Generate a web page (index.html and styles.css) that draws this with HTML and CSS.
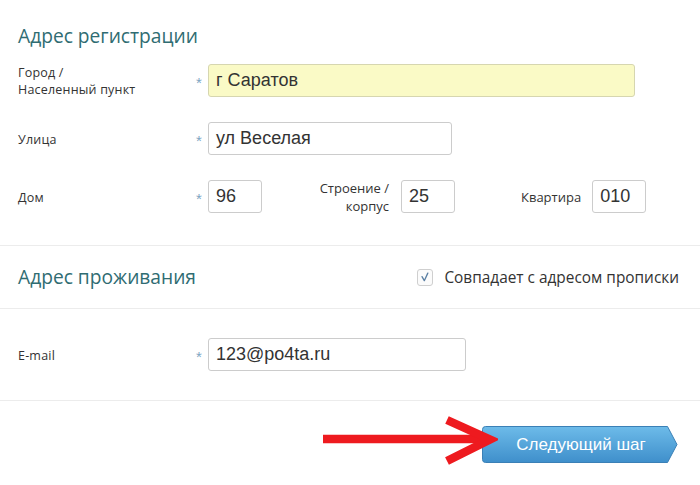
FILE: index.html
```html
<!DOCTYPE html>
<html lang="ru">
<head>
<meta charset="utf-8">
<title>Адрес</title>
<link rel="stylesheet" href="styles.css">
</head>
<body>
<div class="page">
  <section class="block block-reg">
    <h2 class="title">Адрес регистрации</h2>
    <div class="row">
      <div class="label">Город /<br>Населенный пункт</div>
      <span class="req">*</span>
      <div class="input input-city filled">г Саратов</div>
    </div>
    <div class="row">
      <div class="label">Улица</div>
      <span class="req">*</span>
      <div class="input input-street">ул Веселая</div>
    </div>
    <div class="row">
      <div class="label">Дом</div>
      <span class="req">*</span>
      <div class="input input-small">96</div>
      <div class="sublabel sublabel-build">Строение /<br>корпус</div>
      <div class="input input-small">25</div>
      <div class="sublabel sublabel-flat">Квартира</div>
      <div class="input input-small">010</div>
    </div>
  </section>

  <section class="block block-live">
    <h2 class="title">Адрес проживания</h2>
    <label class="check">
      <span class="box">
        <svg viewBox="0 0 16 16" width="16" height="16"><path d="M4.6 7.6 L7.2 12.2 L11.2 3.6" fill="none" stroke="#5a7fa3" stroke-width="1.5" stroke-linecap="round" stroke-linejoin="round"/></svg>
      </span>
      <span class="check-text">Совпадает с адресом прописки</span>
    </label>
  </section>

  <section class="block block-mail">
    <div class="row">
      <div class="label">E-mail</div>
      <span class="req">*</span>
      <div class="input input-mail">123@po4ta.ru</div>
    </div>
  </section>

  <section class="actions">
    <div class="next">
      <svg class="next-bg" viewBox="0 0 196 37" width="196" height="37" preserveAspectRatio="none">
        <defs>
          <linearGradient id="g" x1="0" y1="0" x2="0" y2="1">
            <stop offset="0" stop-color="#6dbbe9"/>
            <stop offset="1" stop-color="#3f8fcb"/>
          </linearGradient>
        </defs>
        <path d="M3.5 0.5 H185.5 L195 18.5 L185.5 36.5 H3.5 Q0.5 36.5 0.5 33.5 V3.5 Q0.5 0.5 3.5 0.5 Z" fill="url(#g)" stroke="#3b80b6" stroke-width="1"/>
      </svg>
      <span class="next-text">Следующий шаг</span>
    </div>
    <svg class="pointer" viewBox="0 0 180 56" width="180" height="56">
      <path d="M5 26 H170" stroke="#ee1a1f" stroke-width="8.5" fill="none"/>
      <path d="M129 7 L172 26.5 L129 48" stroke="#ee1a1f" stroke-width="8.5" fill="none" stroke-linejoin="miter"/>
    </svg>
  </section>
</div>
</body>
</html>
```

FILE: styles.css
```css
html, body {
  margin: 0;
  padding: 0;
  background: #ffffff;
}

.page {
  width: 700px;
  height: 485px;
  overflow: hidden;
  font-family: "Open Sans", "DejaVu Sans", sans-serif;
  color: #333;
}

.block {
  border-bottom: 1px solid #ececec;
  padding-left: 18px;
}

.block-reg {
  padding-top: 24px;
  padding-bottom: 32px;
}

.title {
  margin: 0;
  font-family: "Open Sans", sans-serif;
  font-weight: 400;
  font-size: 19.2px;
  line-height: 24px;
  color: #2f6c72;
}

.block-reg .title {
  margin-bottom: 16px;
}

.row {
  display: flex;
  align-items: center;
  height: 33px;
}

.row + .row {
  margin-top: 25px;
}

.label {
  width: 176px;
  font-size: 12.5px;
  line-height: 17px;
  letter-spacing: 0.2px;
  padding-top: 1px;
  color: #333;
}

.req {
  width: 10px;
  margin-right: 4px;
  text-align: center;
  color: #7ea5c3;
  font-size: 15px;
  line-height: 15px;
  padding-top: 4px;
  font-family: "Liberation Sans", sans-serif;
}

.input {
  box-sizing: border-box;
  height: 33px;
  border: 1px solid #cccccc;
  border-radius: 3px;
  background: #fff;
  padding-left: 7px;
  font-family: "Liberation Sans", Arial, sans-serif;
  font-size: 18px;
  line-height: 31px;
  color: #333;
  white-space: nowrap;
}

.input.filled {
  background: #fafac6;
  border-color: #d6d6b0;
}

.input-city { width: 427px; }
.input-street { width: 244px; }
.input-mail { width: 258px; }
.input-small { width: 54px; }

.sublabel {
  font-size: 13px;
  line-height: 18px;
  color: #333;
}

.sublabel-build {
  width: 127px;
  text-align: right;
  margin-right: 12px;
}

.sublabel-flat {
  margin-left: 66px;
  margin-right: 11px;
}

.block-live {
  height: 62px;
  display: flex;
  align-items: center;
  justify-content: space-between;
  padding-right: 21px;
}

.check {
  display: flex;
  align-items: center;
  gap: 11px;
}

.box {
  box-sizing: border-box;
  width: 16px;
  height: 17px;
  border: 1px solid #cfcfcf;
  border-radius: 3px;
  background: #fbfbfb;
  display: flex;
  align-items: center;
  justify-content: center;
}

.box svg {
  display: block;
}

.check-text {
  font-size: 15.4px;
  color: #333;
}

.block-mail {
  padding-top: 29px;
  padding-bottom: 29px;
}

.actions {
  position: relative;
  display: flex;
  justify-content: flex-end;
  padding-top: 25px;
  padding-right: 22px;
}

.next {
  position: relative;
  width: 196px;
  height: 37px;
  display: flex;
  align-items: center;
  justify-content: center;
}

.next-bg {
  position: absolute;
  left: 0;
  top: 0;
}

.next-text {
  position: relative;
  font-family: "Liberation Sans", Arial, sans-serif;
  font-size: 17px;
  color: #ffffff;
  padding-left: 2px;
}

.pointer {
  position: absolute;
  left: 318px;
  top: 12px;
}
```
